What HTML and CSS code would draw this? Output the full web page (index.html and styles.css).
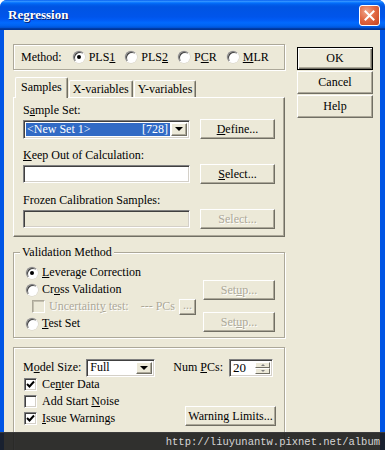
FILE: index.html
```html
<!DOCTYPE html>
<html>
<head>
    <title>Regression</title>
    <link rel="stylesheet" href="styles.css">
</head>
<body>
<div class="window">
    <div class="titlebar">
        <span class="title">Regression</span>
        <span class="close-btn">
            <svg width="11" height="11" viewBox="0 0 11 11"><path d="M1.5 1.5 L9.5 9.5 M9.5 1.5 L1.5 9.5" stroke="#fff" stroke-width="2" stroke-linecap="square"/></svg>
        </span>
    </div>

    <div class="client">
        <div class="main-col">
            <!-- Method -->
            <div class="etched method">
                <span class="method-label">Method:</span>
                <span class="opt"><span class="radio checked"></span><span>PLS<u>1</u></span></span>
                <span class="opt"><span class="radio"></span><span>PLS<u>2</u></span></span>
                <span class="opt"><span class="radio"></span><span>P<u>C</u>R</span></span>
                <span class="opt"><span class="radio"></span><span><u>M</u>LR</span></span>
            </div>

            <!-- Tabs -->
            <div class="tabs">
                <span class="tab active">Samples</span>
                <span class="tab">X-variables</span>
                <span class="tab">Y-variables</span>
            </div>
            <div class="tab-panel">
                <div class="section">
                    <div class="field-label">S<u>a</u>mple Set:</div>
                    <div class="field-row">
                        <div class="combo sample-combo">
                            <span class="combo-sel"><span>&lt;New Set 1&gt;</span><span>[728]</span></span>
                            <span class="drop-btn"><span class="arrow"></span></span>
                        </div>
                        <span class="btn panel-btn"><span><u>D</u>efine...</span></span>
                    </div>
                </div>
                <div class="section">
                    <div class="field-label"><u>K</u>eep Out of Calculation:</div>
                    <div class="field-row">
                        <div class="textbox"></div>
                        <span class="btn panel-btn"><span><u>S</u>elect...</span></span>
                    </div>
                </div>
                <div class="section">
                    <div class="field-label">Frozen Calibration Samples:</div>
                    <div class="field-row">
                        <div class="textbox disabled"></div>
                        <span class="btn panel-btn off">Select...</span>
                    </div>
                </div>
            </div>

            <!-- Validation -->
            <div class="etched validation">
                <span class="group-title">Validation Method</span>
                <div class="val-body">
                    <div class="val-list">
                        <div class="row"><span class="radio checked"></span><span><u>L</u>everage Correction</span></div>
                        <div class="row"><span class="radio"></span><span>Cr<u>o</u>ss Validation</span></div>
                        <div class="row sub">
                            <span class="check off"></span>
                            <span class="off-text">Uncertaint<u>y</u> test:</span>
                            <span class="off-text pcs">--- PCs</span>
                            <span class="btn dots off">...</span>
                        </div>
                        <div class="row"><span class="radio"></span><span><u>T</u>est Set</span></div>
                    </div>
                    <div class="val-btns">
                        <span class="btn setup-btn off"><span>Set<u>u</u>p...</span></span>
                        <span class="btn setup-btn off"><span>Set<u>u</u>p...</span></span>
                    </div>
                </div>
            </div>

            <!-- Model -->
            <div class="etched model">
                <div class="model-row">
                    <span>M<u>o</u>del Size:</span>
                    <div class="combo size-combo">
                        <span class="combo-text">Full</span>
                        <span class="drop-btn"><span class="arrow"></span></span>
                    </div>
                    <span class="pcs-label">Num <u>P</u>Cs:</span>
                    <div class="spin">
                        <span class="spin-text">20</span>
                        <span class="spin-btns">
                            <span class="spin-btn"><span class="up"></span></span>
                            <span class="spin-btn"><span class="down"></span></span>
                        </span>
                    </div>
                </div>
                <div class="model-body">
                    <div class="checks">
                        <div class="row"><span class="check on"><svg width="9" height="9" viewBox="0 0 9 9"><path d="M1 4 L3.5 6.5 L8 1.5" stroke="#000" stroke-width="2" fill="none"/></svg></span><span>Ce<u>n</u>ter Data</span></div>
                        <div class="row"><span class="check"></span><span>Add Start <u>N</u>oise</span></div>
                        <div class="row"><span class="check on"><svg width="9" height="9" viewBox="0 0 9 9"><path d="M1 4 L3.5 6.5 L8 1.5" stroke="#000" stroke-width="2" fill="none"/></svg></span><span><u>I</u>ssue Warnings</span></div>
                    </div>
                    <span class="btn warn-btn">Warning Limits...</span>
                </div>
            </div>
        </div>

        <div class="side-col">
            <span class="btn side-btn default">OK</span>
            <span class="btn side-btn">Cancel</span>
            <span class="btn side-btn">Help</span>
        </div>
    </div>

    <div class="watermark">http://liuyunantw.pixnet.net/album</div>
</div>
</body>
</html>
```

FILE: styles.css
```css
* {
    box-sizing: border-box;
}

body {
    margin: 0;
    font-family: "Liberation Serif", "Times New Roman", serif;
    font-size: 12px;
    color: #000;
}

u {
    text-decoration-thickness: 1px;
    text-underline-offset: 1px;
}

.window {
    position: relative;
    width: 385px;
    height: 450px;
    overflow: hidden;
    background-color: #0055e5;
    border-radius: 7px 7px 0 0;
    display: flex;
    flex-direction: column;
}

.titlebar {
    flex: none;
    height: 30px;
    display: flex;
    align-items: center;
    justify-content: space-between;
    padding: 0 5px 0 8px;
    background: linear-gradient(to bottom, #0058ee 0%, #3593ff 4%, #288eff 6%, #127dff 8%, #036ffc 10%, #0262ee 14%, #0057e5 20%, #0054e3 24%, #0055eb 56%, #005bf5 66%, #026afe 76%, #0062ef 86%, #0052d6 92%, #0040ab 94%, #003092 100%);
}

.title {
    color: #fff;
    font-weight: bold;
    font-size: 13px;
    text-shadow: 1px 1px 0 #0a1e6a;
}

.close-btn {
    width: 21px;
    height: 21px;
    border: 1px solid #fff;
    border-radius: 3px;
    background: radial-gradient(circle at 35% 30%, #f0a78c 0%, #e26a45 45%, #c8421c 100%);
    display: flex;
    align-items: center;
    justify-content: center;
}

.client {
    flex: 1;
    margin: 0 5px 0 4px;
    background-color: #ece9d8;
    display: flex;
    gap: 12px;
    padding: 14px 0 0 9px;
}

.main-col {
    width: 272px;
    flex: none;
    display: flex;
    flex-direction: column;
}

.side-col {
    width: 76px;
    flex: none;
    display: flex;
    flex-direction: column;
    gap: 1px;
    padding-top: 3px;
}

/* Group boxes */
.etched {
    border: 1px solid #aca899;
    box-shadow: 1px 1px 0 #fff, inset 1px 1px 0 #fff;
}

.method {
    height: 26px;
    display: flex;
    align-items: center;
    gap: 10px;
    padding-left: 7px;
}

.method-label {
    margin-right: 1px;
}

.opt {
    display: flex;
    align-items: center;
    gap: 4px;
}

/* Radio / check */
.radio {
    width: 12px;
    height: 12px;
    flex: none;
    border-radius: 50%;
    background-color: #fff;
    border: 1px solid;
    border-color: #808080 #fff #fff #808080;
    box-shadow: inset 1px 1px 0 #404040, 0 0 0 0.5px #d4d0c8;
    display: flex;
    align-items: center;
    justify-content: center;
}

.radio.checked::after {
    content: "";
    width: 4px;
    height: 4px;
    border-radius: 50%;
    background-color: #000;
}

.check {
    width: 13px;
    height: 13px;
    flex: none;
    background-color: #fff;
    border: 1px solid;
    border-color: #808080 #fff #fff #808080;
    box-shadow: inset 1px 1px 0 #404040, inset -1px -1px 0 #d4d0c8;
    display: flex;
    align-items: center;
    justify-content: center;
}

.check.off {
    background-color: #ece9d8;
    border-color: #aca899 #fff #fff #aca899;
    box-shadow: inset 1px 1px 0 #c4c0b0;
}

/* Buttons */
.btn {
    height: 23px;
    background-color: #ece9d8;
    border: 1px solid;
    border-color: #fff #716f64 #716f64 #fff;
    box-shadow: inset -1px -1px 0 #aca899;
    display: flex;
    align-items: center;
    justify-content: center;
    white-space: nowrap;
}

.btn.default {
    border-color: #000;
    box-shadow: inset 1px 1px 0 #fff, inset -1px -1px 0 #716f64, inset -2px -2px 0 #aca899;
}

.btn.off,
.off-text {
    color: #aca899;
    text-shadow: 1px 1px 0 #fff;
}

.side-btn {
    width: 76px;
}

/* Tabs */
.tabs {
    height: 20px;
    margin-top: 7px;
    padding-left: 2px;
    display: flex;
    align-items: flex-end;
}

.tab {
    height: 17px;
    padding: 0 3px;
    border-top: 1px solid #fff;
    border-left: 1px solid #fff;
    border-right: 1px solid #716f64;
    border-radius: 2px 2px 0 0;
    box-shadow: inset -1px 0 0 #aca899;
    display: flex;
    align-items: center;
    background-color: #ece9d8;
}

.tab.active {
    position: relative;
    z-index: 1;
    height: 21px;
    margin-bottom: -1px;
    padding: 0 5px 2px 5px;
}

.tab + .tab {
    margin-left: 1px;
}

.tab-panel {
    height: 140px;
    border: 1px solid;
    border-color: #fff #716f64 #716f64 #fff;
    box-shadow: inset -1px -1px 0 #aca899;
    padding: 5px 9px 0 9px;
}

.section + .section {
    margin-top: 9px;
}

.field-label {
    height: 14px;
    line-height: 14px;
    margin-bottom: 2px;
}

.field-row {
    height: 20px;
    display: flex;
    align-items: center;
    justify-content: space-between;
}

.panel-btn {
    width: 75px;
    height: 20px;
}

.textbox,
.combo,
.spin {
    background-color: #fff;
    border: 1px solid;
    border-color: #808080 #fff #fff #808080;
    box-shadow: inset 1px 1px 0 #404040, inset -1px -1px 0 #d4d0c8;
}

.textbox {
    width: 167px;
    height: 18px;
}

.textbox.disabled {
    background-color: #ece9d8;
}

.combo {
    height: 19px;
    display: flex;
    align-items: stretch;
    padding: 2px;
}

.sample-combo {
    width: 167px;
}

.combo-sel {
    flex: 1;
    margin-right: 1px;
    background-color: #316ac5;
    color: #fff;
    display: flex;
    align-items: center;
    justify-content: space-between;
    padding: 0 2px 0 1px;
}

.combo-text {
    flex: 1;
    display: flex;
    align-items: center;
    padding-left: 1px;
}

.drop-btn {
    width: 16px;
    flex: none;
    background-color: #ece9d8;
    border: 1px solid;
    border-color: #fff #716f64 #716f64 #fff;
    box-shadow: inset -1px -1px 0 #aca899;
    display: flex;
    align-items: center;
    justify-content: center;
}

.arrow {
    width: 0;
    height: 0;
    border-left: 4px solid transparent;
    border-right: 4px solid transparent;
    border-top: 4px solid #000;
}

/* Validation */
.validation {
    margin-top: 15px;
    padding: 0 9px 5px 12px;
}

.group-title {
    display: block;
    width: fit-content;
    height: 14px;
    line-height: 14px;
    margin: -8px 0 5px -6px;
    padding: 0 2px;
    background-color: #ece9d8;
}

.val-body {
    display: grid;
    grid-template-columns: minmax(0, 1fr) 72px;
    column-gap: 6px;
}

.row {
    height: 17px;
    display: flex;
    align-items: center;
    gap: 4px;
    white-space: nowrap;
}

.row > * {
    flex: none;
}

.row.sub {
    padding-left: 6px;
    gap: 4px;
}

.pcs {
    margin-left: 8px;
}

.dots {
    width: 17px;
    height: 16px;
    padding-bottom: 3px;
}

.val-btns {
    display: flex;
    flex-direction: column;
    gap: 12px;
    padding-top: 16px;
}

.setup-btn {
    height: 20px;
}

/* Model */
.model {
    margin-top: 9px;
    padding: 10px 8px 40px 9px;
}

.model-row {
    height: 19px;
    display: flex;
    align-items: center;
}

.size-combo {
    width: 69px;
    height: 18px;
    margin-left: 5px;
}

.pcs-label {
    margin-left: 18px;
}

.spin {
    width: 44px;
    height: 18px;
    margin-left: 6px;
    display: flex;
    padding: 2px;
}

.spin-text {
    flex: 1;
    display: flex;
    align-items: center;
    padding-left: 1px;
    font-size: 13px;
}

.spin-btns {
    width: 15px;
    display: flex;
    flex-direction: column;
}

.spin-btn {
    flex: 1;
    background-color: #ece9d8;
    border: 1px solid;
    border-color: #fff #716f64 #716f64 #fff;
    display: flex;
    align-items: center;
    justify-content: center;
}

.up,
.down {
    width: 0;
    height: 0;
    border-left: 2px solid transparent;
    border-right: 2px solid transparent;
}

.up {
    border-bottom: 2px solid #808080;
}

.down {
    border-top: 2px solid #808080;
}

.model-body {
    display: grid;
    grid-template-columns: 1fr auto;
    align-items: end;
    margin-top: -1px;
}

.checks .row {
    padding-left: 1px;
    gap: 5px;
}

.warn-btn {
    width: 91px;
    height: 20px;
    margin-bottom: 1px;
}

/* Watermark over the bottom edge */
.watermark {
    position: absolute;
    left: 0;
    right: 0;
    bottom: 0;
    height: 18px;
    line-height: 18px;
    padding-right: 5px;
    text-align: right;
    background-color: rgba(28, 28, 28, 0.9);
    border-top: 1px solid #3c3c3c;
    color: #d6d6d6;
    font-family: "Liberation Mono", "Courier New", monospace;
    font-size: 10.5px;
}
```
